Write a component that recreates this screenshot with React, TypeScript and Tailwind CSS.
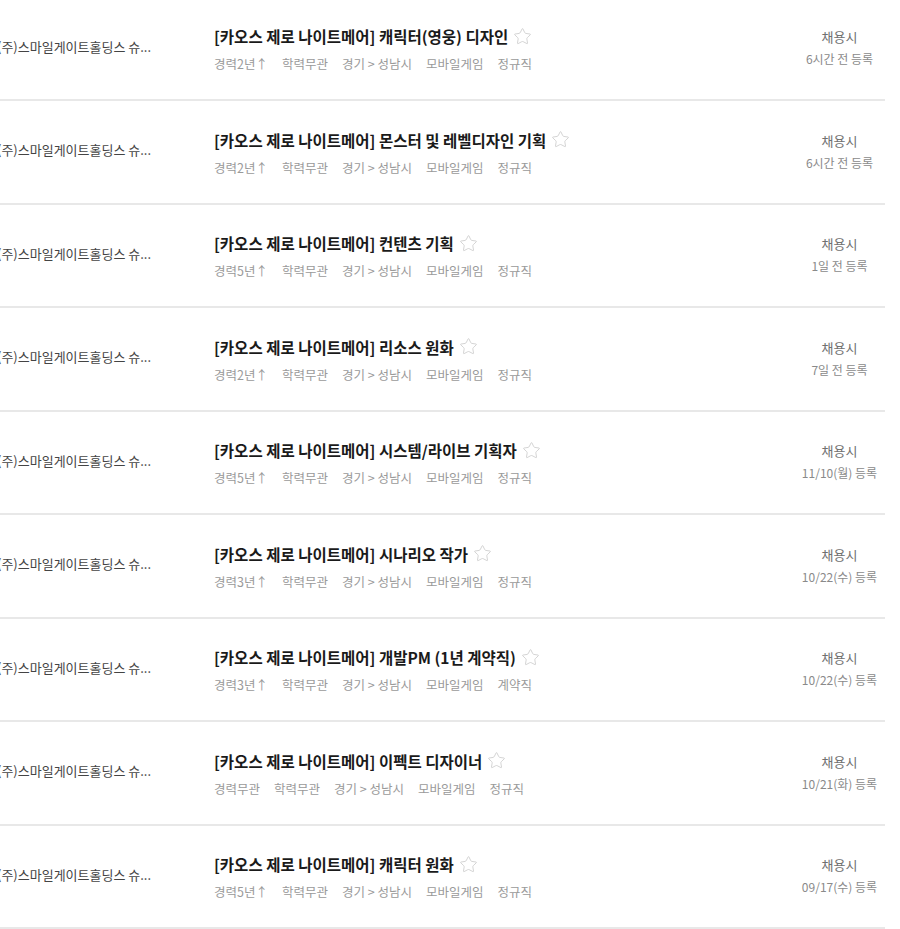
import { Star } from 'lucide-react';

type Job = {
  title: string;
  career: string;
  type: string;
  date: string;
};

const jobs: Job[] = [
  { title: '캐릭터(영웅) 디자인', career: '경력2년↑', type: '정규직', date: '6시간 전 등록' },
  { title: '몬스터 및 레벨디자인 기획', career: '경력2년↑', type: '정규직', date: '6시간 전 등록' },
  { title: '컨텐츠 기획', career: '경력5년↑', type: '정규직', date: '1일 전 등록' },
  { title: '리소스 원화', career: '경력2년↑', type: '정규직', date: '7일 전 등록' },
  { title: '시스템/라이브 기획자', career: '경력5년↑', type: '정규직', date: '11/10(월) 등록' },
  { title: '시나리오 작가', career: '경력3년↑', type: '정규직', date: '10/22(수) 등록' },
  { title: '개발PM (1년 계약직)', career: '경력3년↑', type: '계약직', date: '10/22(수) 등록' },
  { title: '이펙트 디자이너', career: '경력무관', type: '정규직', date: '10/21(화) 등록' },
  { title: '캐릭터 원화', career: '경력5년↑', type: '정규직', date: '09/17(수) 등록' },
];

const JobRow = ({ job }: { job: Job }) => {
  return (
    <div className="flex h-[103.5px] border-b-2 border-[#e8e8e8]">
      <div className="w-[217px] shrink-0 pt-[40px] text-[13px] leading-[18px] text-[#444] whitespace-nowrap">
        (주)스마일게이트홀딩스 슈...
      </div>

      <div className="flex-1 pt-[28.5px]">
        <div className="flex items-center gap-[5px]">
          <span className="text-[15.5px] leading-[20px] font-bold text-[#1a1a1a] whitespace-nowrap">
            [카오스 제로 나이트메어] {job.title}
          </span>
          <Star size={19} strokeWidth={1} className="text-[#c8c8c8]" />
        </div>
        <div className="mt-[10px] flex gap-[14px] text-[12.5px] leading-[16px] text-[#9a9a9a] whitespace-nowrap">
          <span>{job.career}</span>
          <span>학력무관</span>
          <span>경기 &gt; 성남시</span>
          <span>모바일게임</span>
          <span>{job.type}</span>
        </div>
      </div>

      <div className="w-[95px] shrink-0 flex flex-col items-center pl-[4px] pt-[30.5px] whitespace-nowrap">
        <span className="text-[13px] leading-[18px] text-[#707070]">채용시</span>
        <span className="mt-[5px] text-[12px] leading-[16px] text-[#8a8a8a]">{job.date}</span>
      </div>
    </div>
  );
};

export default function App() {
  return (
    <div
      className="w-[900px] h-[929px] overflow-hidden bg-white"
      style={{ fontFamily: '"Noto Sans CJK KR", "Noto Sans", sans-serif' }}
    >
      <div className="w-[888px] -ml-[3px] -mt-[2.5px]">
        {jobs.map((job, i) => (
          <JobRow key={i} job={job} />
        ))}
      </div>
    </div>
  );
}
